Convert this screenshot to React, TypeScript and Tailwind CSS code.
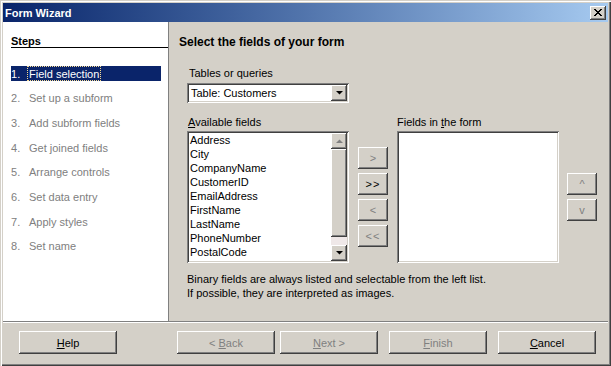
import React from 'react'

const raised =
  'shadow-[inset_-1px_-1px_#404040,inset_1px_1px_#ffffff,inset_-2px_-2px_#808080,inset_2px_2px_#d4d0c8]'
const sunken =
  'shadow-[inset_1px_1px_#808080,inset_-1px_-1px_#ffffff,inset_2px_2px_#404040,inset_-2px_-2px_#d4d0c8]'

const steps = [
  'Field selection',
  'Set up a subform',
  'Add subform fields',
  'Get joined fields',
  'Arrange controls',
  'Set data entry',
  'Apply styles',
  'Set name',
]

const fields = [
  'Address',
  'City',
  'CompanyName',
  'CustomerID',
  'EmailAddress',
  'FirstName',
  'LastName',
  'PhoneNumber',
  'PostalCode',
]

function Arrow({ dir, disabled }: { dir: 'up' | 'down'; disabled?: boolean }) {
  const pts = dir === 'up' ? '0,4 7,4 3.5,0.5' : '0,0 7,0 3.5,3.5'
  return (
    <svg width="7" height="4" viewBox="0 0 7 4" className="block">
      <polygon points={pts} fill={disabled ? '#808080' : '#000000'} />
    </svg>
  )
}

function Btn({
  children,
  disabled,
  className = '',
}: {
  children: React.ReactNode
  disabled?: boolean
  className?: string
}) {
  return (
    <div
      className={`${raised} bg-[#d4d0c8] flex items-center justify-center ${
        disabled ? 'text-[#808080]' : 'text-black'
      } ${className}`}
    >
      {children}
    </div>
  )
}

export default function App() {
  return (
    <div className="w-[611px] h-[366px] bg-[#d4d0c8] p-[3px] flex flex-col font-['Liberation_Sans',Arial,sans-serif] text-[11px] leading-[14px] text-black shadow-[inset_1px_1px_#d4d0c8,inset_2px_2px_#ffffff,inset_-1px_-1px_#404040,inset_-2px_-2px_#808080]">
      {/* title bar */}
      <div className="h-[19px] shrink-0 bg-linear-to-r from-[#0a246a] to-[#a6caf0] flex items-center pl-[2px] pr-[2px]">
        <span className="text-white font-bold text-[11px]">Form Wizard</span>
        <div className={`${raised} ml-auto w-[16px] h-[14px] bg-[#d4d0c8] flex items-center justify-center`}>
          <svg width="8" height="7" viewBox="0 0 8 7" className="block">
            <path d="M0 0h2v1h-2zM6 0h2v1h-2zM1 1h2v1h-2zM5 1h2v1h-2zM2 2h4v1h-4zM3 3h2v1h-2zM2 4h4v1h-4zM1 5h2v1h-2zM5 5h2v1h-2zM0 6h2v1h-2zM6 6h2v1h-2z" fill="#000" />
          </svg>
        </div>
      </div>

      {/* body */}
      <div className="h-[299px] shrink-0 flex">
        <div className="w-[166px] bg-white border-r border-[#808080] pl-[8px] flex flex-col">
          <div className="mt-[13px] h-[13px] leading-[12px] border-b border-black font-bold">Steps</div>
          <div className="mt-[18px] flex flex-col gap-[9.7px]">
            {steps.map((s, i) => (
              <div
                key={s}
                className={`w-[150px] h-[15px] flex items-center ${
                  i === 0 ? 'bg-[#0a246a] text-white' : 'text-[#808080]'
                }`}
              >
                <span className="w-[16px]">{i + 1}.</span>
                {i === 0 ? (
                  <span className="h-[15px] px-[1px] flex items-center border border-dotted border-[#f5db95]">{s}</span>
                ) : (
                  <span className="pl-[2px]">{s}</span>
                )}
              </div>
            ))}
          </div>
        </div>

        <div className="flex-1 pl-[10px] pt-[13px] flex flex-col">
          <div className="font-bold text-[12px]">Select the fields of your form</div>
          <div className="ml-[8px] flex flex-col">
            <div className="mt-[17px] pl-[2px]">Tables or queries</div>
            <div className={`${sunken} mt-[3px] w-[162px] h-[20px] bg-white flex items-center pl-[4px] pr-[2px]`}>
              <span>Table: Customers</span>
              <Btn className="ml-auto w-[16px] h-[16px]">
                <Arrow dir="down" />
              </Btn>
            </div>

            <div className="mt-[12px] flex">
              <div className="w-[162px] flex flex-col">
                <div className="pl-[1px]">
                  <span className="underline">A</span>vailable fields
                </div>
                <div className={`${sunken} mt-[2px] h-[132px] bg-white p-[2px] flex`}>
                  <div className="flex-1 pl-[1px]">
                    {fields.map((f) => (
                      <div key={f} className="h-[14px] leading-[14px]">
                        {f}
                      </div>
                    ))}
                  </div>
                  <div className="w-[16px] flex flex-col">
                    <Btn className="h-[16px]">
                      <Arrow dir="up" disabled />
                    </Btn>
                    <div className={`${raised} h-[88px] bg-[#d4d0c8]`} />
                    <div className="flex-1 bg-[#efe8e8]" />
                    <Btn className="h-[16px]">
                      <Arrow dir="down" />
                    </Btn>
                  </div>
                </div>
              </div>

              <div className="ml-[9px] pt-[32px] flex flex-col gap-[4px]">
                <Btn disabled className="w-[30px] h-[22px]">&gt;</Btn>
                <Btn className="w-[30px] h-[22px] tracking-[1px]">&gt;&gt;</Btn>
                <Btn disabled className="w-[30px] h-[22px]">&lt;</Btn>
                <Btn disabled className="w-[30px] h-[22px] tracking-[1px]">&lt;&lt;</Btn>
              </div>

              <div className="ml-[9px] w-[162px] flex flex-col">
                <div>
                  Fields in <span className="underline">t</span>he form
                </div>
                <div className={`${sunken} mt-[2px] h-[132px] bg-white`} />
              </div>

              <div className="ml-[8px] pt-[58px] flex flex-col gap-[4px]">
                <Btn disabled className="w-[30px] h-[22px]">^</Btn>
                <Btn disabled className="w-[30px] h-[22px]">v</Btn>
              </div>
            </div>

            <div className="mt-[9px]">
              <div>Binary fields are always listed and selectable from the left list.</div>
              <div>If possible, they are interpreted as images.</div>
            </div>
          </div>
        </div>
      </div>

      {/* separator */}
      <div className="h-[2px] shrink-0 border-t border-[#808080] border-b border-b-white" />

      {/* buttons */}
      <div className="h-[40px] shrink-0 pl-[16px] pt-[8px] flex items-start">
        <Btn className="w-[98px] h-[23px]">
          <span>
            <span className="underline">H</span>elp
          </span>
        </Btn>
        <Btn disabled className="ml-[60px] w-[98px] h-[23px]">
          <span>
            &lt; <span className="underline">B</span>ack
          </span>
        </Btn>
        <Btn disabled className="ml-[5px] w-[98px] h-[23px]">
          <span>
            <span className="underline">N</span>ext &gt;
          </span>
        </Btn>
        <Btn disabled className="ml-[11px] w-[98px] h-[23px]">
          <span>
            <span className="underline">F</span>inish
          </span>
        </Btn>
        <Btn className="ml-[11px] w-[98px] h-[23px]">
          <span>
            <span className="underline">C</span>ancel
          </span>
        </Btn>
      </div>
    </div>
  )
}
